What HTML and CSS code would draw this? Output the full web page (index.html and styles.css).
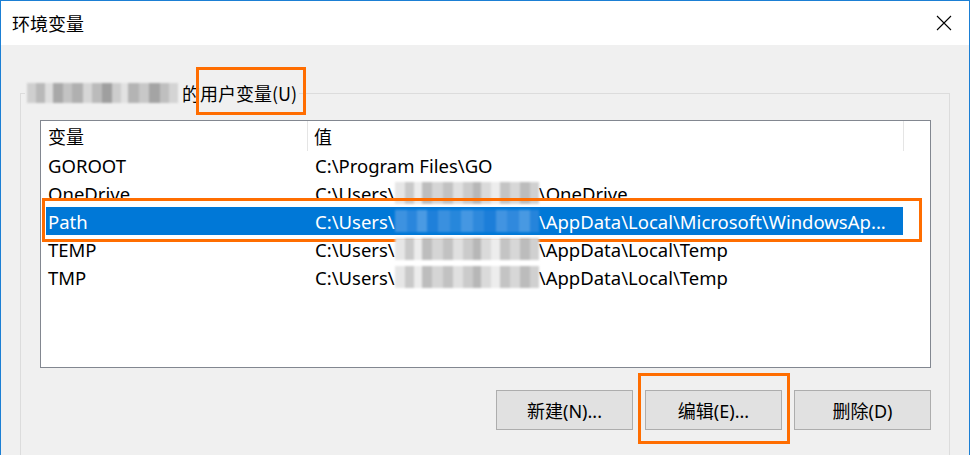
FILE: index.html
```html
<!DOCTYPE html>
<html lang="zh-CN">
<head>
    <meta charset="UTF-8">
    <title>环境变量</title>
    <link rel="stylesheet" href="styles.css">
</head>
<body>

    <!-- 窗口 -->
    <div class="window">

        <!-- 标题栏 -->
        <div class="titlebar">
            <span class="title">环境变量</span>
            <svg class="close" width="16" height="16" viewBox="0 0 16 16">
                <path d="M1 1 L15 15 M15 1 L1 15" stroke="#000" stroke-width="1.1" fill="none"/>
            </svg>
        </div>

        <!-- 用户变量 -->
        <div class="content">
            <fieldset class="group">
                <legend><span class="blur blur-name"></span>的<span class="mark">用户变量(U)</span></legend>

                <div class="list">
                    <div class="list-head">
                        <div class="head-cell c1">变量</div>
                        <div class="head-cell c2">值</div>
                    </div>
                    <div class="row">
                        <div class="cell c1">GOROOT</div>
                        <div class="cell c2">C:\Program Files\GO</div>
                    </div>
                    <div class="row">
                        <div class="cell c1">OneDrive</div>
                        <div class="cell c2">C:\Users\<span class="blur blur-user"></span>\OneDrive</div>
                    </div>
                    <div class="row selected">
                        <div class="cell c1">Path</div>
                        <div class="cell c2">C:\Users\<span class="blur blur-sel"></span>\AppData\Local\Microsoft\WindowsAp...</div>
                    </div>
                    <div class="row">
                        <div class="cell c1">TEMP</div>
                        <div class="cell c2">C:\Users\<span class="blur blur-user"></span>\AppData\Local\Temp</div>
                    </div>
                    <div class="row">
                        <div class="cell c1">TMP</div>
                        <div class="cell c2">C:\Users\<span class="blur blur-user"></span>\AppData\Local\Temp</div>
                    </div>
                </div>

                <div class="buttons">
                    <button class="btn">新建(N)...</button>
                    <button class="btn marked">编辑(E)...</button>
                    <button class="btn">删除(D)</button>
                </div>
            </fieldset>
        </div>
    </div>

</body>
</html>
```

FILE: styles.css
```css
/* 基础 */
html, body {
    margin: 0;
    padding: 0;
}

body {
    width: 970px;
    height: 455px;
    overflow: hidden;
    font-family: "Noto Sans", "Noto Sans CJK SC", sans-serif;
    font-size: 18.5px;
    color: #000;
    background: #f0f0f0;
}

.window {
    box-sizing: border-box;
    width: 970px;
    height: 470px;
    border: 1px solid #1b7fd4;
    background: #f0f0f0;
}

/* 标题栏 */
.titlebar {
    height: 44px;
    background: #fff;
    display: flex;
    align-items: center;
    justify-content: space-between;
    padding: 0 17px 0 11px;
}

.title {
    font-size: 18px;
    font-family: "Noto Sans CJK SC", sans-serif;
}

.close {
    display: block;
}

/* 分组框 */
.content {
    padding: 36px 19px 0 19px;
}

.group {
    margin: 0;
    border: 1px solid #dcdcdc;
    padding: 15px 18px 30px 19px;
    min-width: 0;
}

.group legend {
    padding: 0 2px;
    margin-left: -15px;
    height: 24px;
    line-height: 24px;
    font-family: "Noto Sans CJK SC", sans-serif;
    font-size: 18px;
    display: flex;
    align-items: center;
}

.mark {
    position: relative;
}

.mark::after {
    content: "";
    position: absolute;
    left: -4px;
    right: -9px;
    top: -14px;
    bottom: -10px;
    border: 3px solid #ff6d00;
}

/* 模糊块 */
.blur {
    display: inline-block;
    vertical-align: middle;
}

.blur-name {
    width: 151px;
    height: 20px;
    margin-right: 4px;
    background: linear-gradient(90deg,
        #cfcfcf 0 6%, #b9b9b9 6% 12%, #dedede 12% 17%, #a9a9a9 17% 24%,
        #c3c3c3 24% 30%, #b0b0b0 30% 37%, #d6d6d6 37% 43%, #bbbbbb 43% 50%,
        #9f9f9f 50% 56%, #cdcdcd 56% 62%, #e2e2e2 62% 67%, #b4b4b4 67% 74%,
        #c8c8c8 74% 81%, #a4a4a4 81% 88%, #bfbfbf 88% 94%, #d4d4d4 94% 100%);
    filter: blur(1px);
}

.blur-user {
    width: 144px;
    height: 22px;
    margin-top: -3px;
    background: linear-gradient(90deg,
        #e6e6e6 0 7%, #c9c9c9 7% 13%, #ececec 13% 19%, #bdbdbd 19% 26%,
        #d5d5d5 26% 33%, #c2c2c2 33% 40%, #e0e0e0 40% 47%, #cbcbcb 47% 54%,
        #b7b7b7 54% 60%, #dadada 60% 67%, #ededed 67% 73%, #c4c4c4 73% 80%,
        #d7d7d7 80% 87%, #bcbcbc 87% 94%, #d0d0d0 94% 100%);
    filter: blur(1px);
}

.blur-sel {
    width: 144px;
    height: 22px;
    margin-top: -3px;
    background: linear-gradient(90deg,
        #3d92e0 0 8%, #2a86dc 8% 15%, #4a9ae3 15% 22%, #1f80da 22% 30%,
        #3a90df 30% 38%, #2787db 38% 46%, #4597e2 46% 54%, #2e89dc 54% 62%,
        #1c7ed9 62% 70%, #4294e1 70% 78%, #3089dd 78% 86%, #4899e2 86% 94%,
        #2584db 94% 100%);
    filter: blur(1px);
}

/* 列表 */
.list {
    height: 246px;
    background: #fff;
    border: 1px solid #828790;
    padding: 0 0 0 5px;
    overflow: hidden;
}

.list-head {
    display: flex;
    height: 30px;
    line-height: 30px;
    font-family: "Noto Sans CJK SC", sans-serif;
    font-size: 18px;
}

.head-cell {
    box-sizing: border-box;
    border-right: 1px solid #e5e5e5;
}

.head-cell.c1 {
    width: 262px;
    padding-left: 2px;
}

.head-cell.c2 {
    width: 596px;
    padding-left: 6px;
}

.row {
    display: flex;
    width: 857px;
    height: 28px;
    line-height: 28px;
    white-space: nowrap;
}

.cell {
    box-sizing: border-box;
    display: flex;
    align-items: center;
    padding-top: 2px;
}

.cell.c1 {
    width: 261px;
    padding-left: 2px;
}

.cell.c2 {
    flex: 1;
    padding-left: 8px;
}

.row.selected {
    background: #0078d7;
    color: #fff;
    position: relative;
}

.row.selected::after {
    content: "";
    position: absolute;
    left: -4px;
    right: -19px;
    top: -9px;
    bottom: -7px;
    border: 3px solid #ff6d00;
}

/* 按钮 */
.buttons {
    display: flex;
    justify-content: flex-end;
    gap: 12px;
    margin-top: 22px;
}

.btn {
    width: 137px;
    height: 40px;
    background: #e1e1e1;
    border: 1px solid #adadad;
    font-family: "Noto Sans", "Noto Sans CJK SC", sans-serif;
    font-size: 18px;
    color: #000;
    padding: 0;
}

.btn.marked {
    position: relative;
}

.btn.marked::after {
    content: "";
    position: absolute;
    left: -8px;
    right: -9px;
    top: -18px;
    bottom: -15px;
    border: 3px solid #ff6d00;
}
```
